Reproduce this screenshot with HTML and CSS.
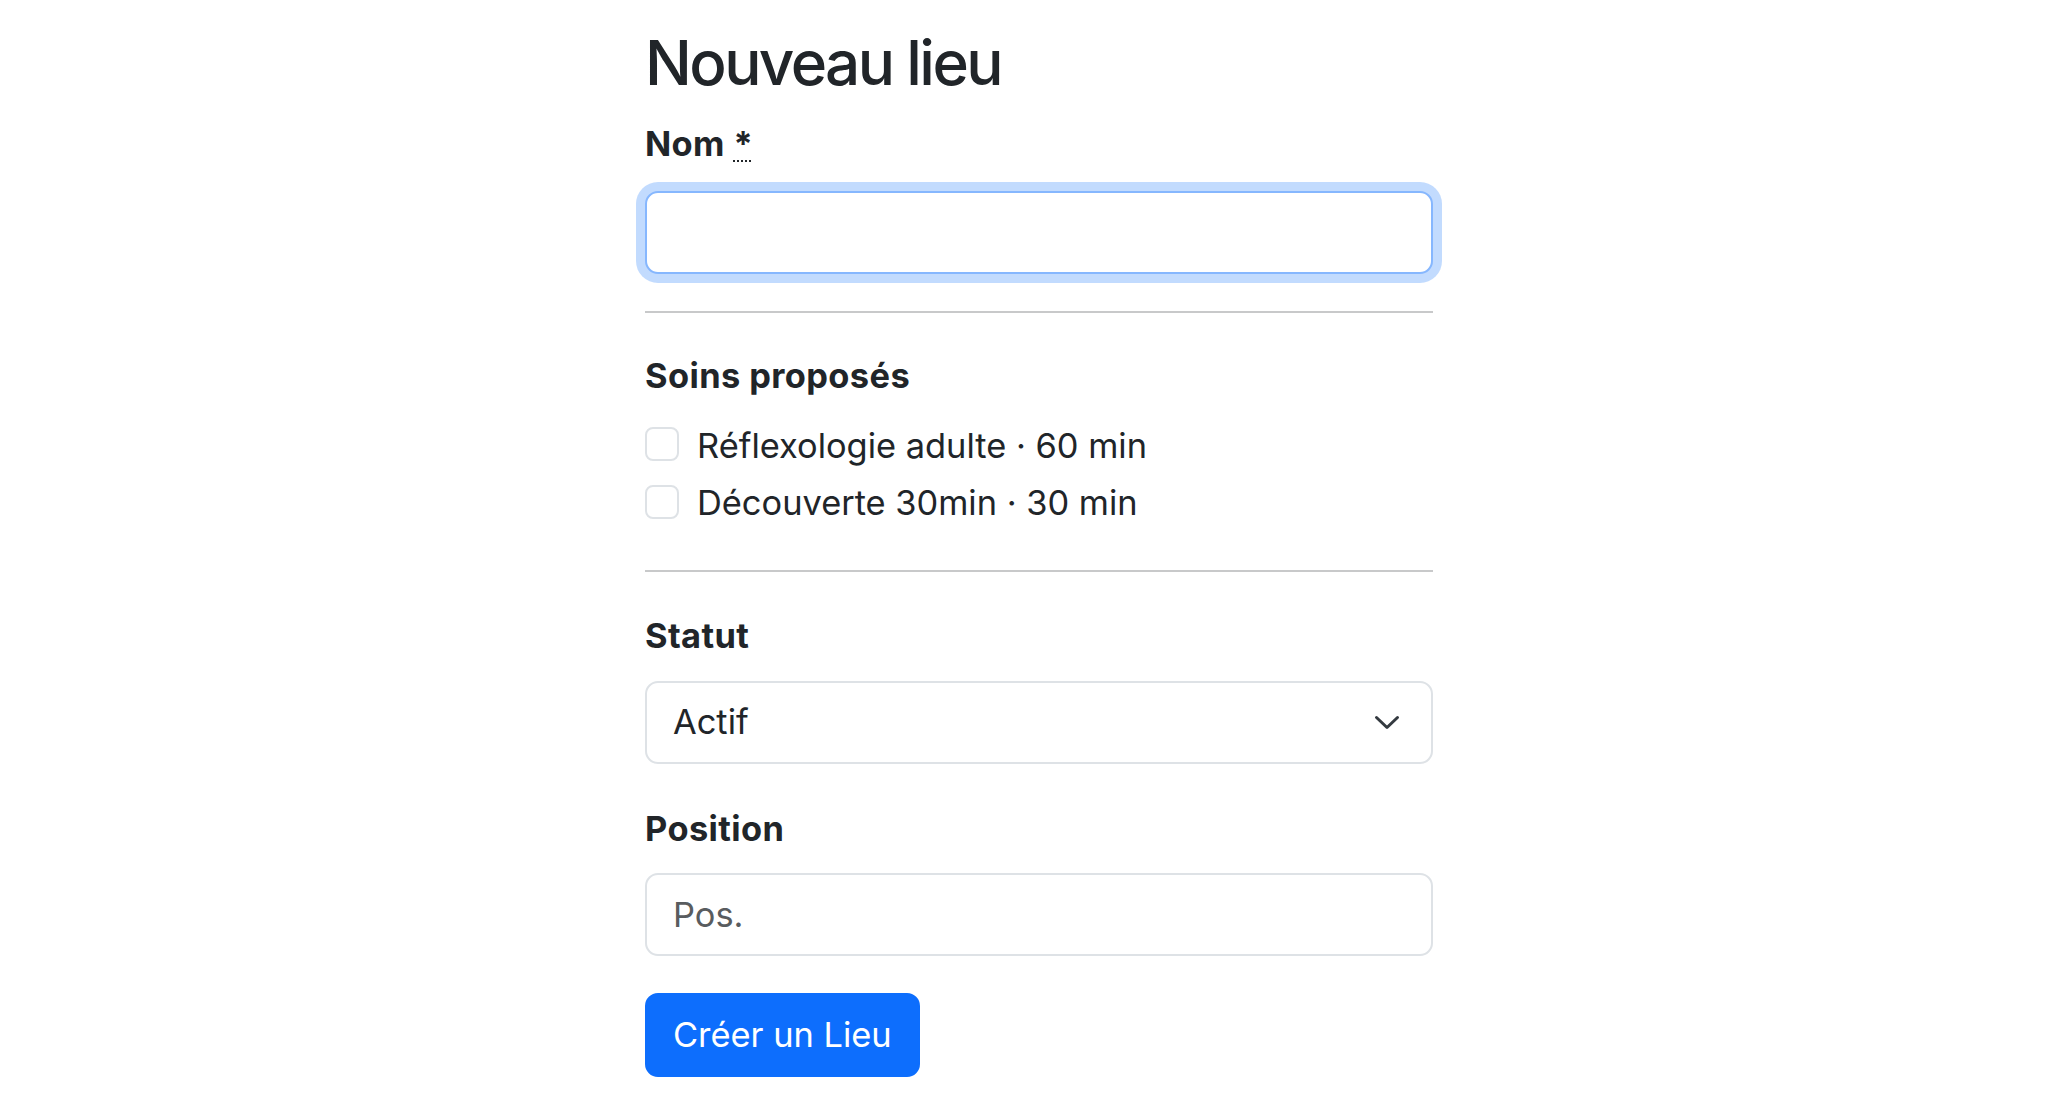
FILE: index.html
```html
<!DOCTYPE html>
<html lang="fr">
<head>
<meta charset="utf-8">
<title>Nouveau lieu</title>
<link rel="stylesheet" href="styles.css">
</head>
<body>
<main class="page">
  <h1 class="title">Nouveau lieu</h1>
  <form class="form">
    <div class="field field-name">
      <label class="label label-name" for="nom">Nom <abbr class="req" title="obligatoire">*</abbr></label>
      <input class="control is-focused" id="nom" type="text">
    </div>
    <hr class="sep sep-1">
    <fieldset class="soins">
      <div class="label label-soins">Soins proposés</div>
      <label class="check-row check-row-1"><input class="check" type="checkbox"><span class="check-text">Réflexologie adulte · 60 min</span></label>
      <label class="check-row check-row-2"><input class="check" type="checkbox"><span class="check-text">Découverte 30min · 30 min</span></label>
    </fieldset>
    <hr class="sep sep-2">
    <div class="field field-statut">
      <label class="label label-statut" for="statut">Statut</label>
      <div class="select-wrap">
        <select class="control select" id="statut">
          <option>Actif</option>
          <option>Inactif</option>
        </select>
        <svg class="chevron" width="26" height="15" viewBox="0 0 26 15" aria-hidden="true"><path d="M2.5 2.5 L13 12.5 L23.5 2.5" fill="none" stroke="#343a40" stroke-width="3" stroke-linecap="round" stroke-linejoin="round"/></svg>
      </div>
    </div>
    <div class="field field-position">
      <label class="label label-position" for="pos">Position</label>
      <input class="control" id="pos" type="text" placeholder="Pos.">
    </div>
    <button class="btn" type="button">Créer un Lieu</button>
  </form>
</main>
</body>
</html>
```

FILE: styles.css
```css
html, body {
  margin: 0;
  padding: 0;
  background: #ffffff;
}

body {
  font-family: Inter, "Liberation Sans", Arial, sans-serif;
  font-size: 34.4px;
  line-height: 1.5;
  color: #212529;
}

.page {
  width: 788px;
  margin-left: calc(50% - 379px);
}

.title {
  font-size: 62px;
  font-weight: 500;
  line-height: 1.2;
  letter-spacing: -2.6px;
  margin: 26px 0 18px;
  color: #212529;
}

.form {
  margin: 0;
}

.label {
  display: block;
  font-weight: 700;
  letter-spacing: 0.4px;
  color: #212529;
}

.label-name {
  margin-bottom: 21px;
}

.req {
  text-decoration: underline dotted;
  text-decoration-thickness: 2px;
  text-underline-offset: 4px;
  cursor: help;
}

.control {
  display: block;
  box-sizing: border-box;
  width: 100%;
  height: 83px;
  margin: 0;
  padding: 0 26px;
  font-family: inherit;
  font-size: 34.4px;
  line-height: 1.5;
  color: #212529;
  background: #ffffff;
  border: 2px solid #dee2e6;
  border-radius: 13px;
  outline: none;
}

.control::placeholder {
  color: #595c5f;
  opacity: 1;
}

.control.is-focused {
  border-color: #86b7fe;
  box-shadow: 0 0 0 9px rgba(13, 110, 253, 0.25);
}

.sep {
  border: 0;
  height: 2px;
  background: #c8c9ca;
  margin: 0;
}

.sep-1 {
  margin-top: 37px;
}

.soins {
  border: 0;
  margin: 36.7px 0 0;
  padding: 0;
  min-width: 0;
}

.label-soins {
  margin-bottom: 18.7px;
}

.check-row {
  display: flex;
  align-items: flex-start;
  gap: 18px;
  cursor: pointer;
}

.check-row-2 {
  margin-top: 5.8px;
}

.check {
  appearance: none;
  -webkit-appearance: none;
  flex: none;
  box-sizing: border-box;
  width: 34px;
  height: 34px;
  margin: 7.3px 0 0;
  border: 2px solid #dee2e6;
  border-radius: 8px;
  background: #ffffff;
}

.check-text {
  white-space: nowrap;
}

.sep-2 {
  margin-top: 41px;
}

.field-statut {
  margin-top: 38px;
}

.label-statut {
  margin-bottom: 19px;
}

.select-wrap {
  position: relative;
}

.select {
  appearance: none;
  -webkit-appearance: none;
  padding-right: 80px;
}

.chevron {
  position: absolute;
  right: 33px;
  top: 34px;
  pointer-events: none;
}

.field-position {
  margin-top: 39.4px;
}

.label-position {
  margin-bottom: 18.3px;
}

.btn {
  display: block;
  box-sizing: border-box;
  height: 84px;
  margin-top: 37px;
  padding: 0 26px;
  font-family: inherit;
  font-size: 34.4px;
  line-height: 1.5;
  color: #ffffff;
  background: #0d6efd;
  border: 2px solid #0d6efd;
  border-radius: 13px;
  cursor: pointer;
}
```
